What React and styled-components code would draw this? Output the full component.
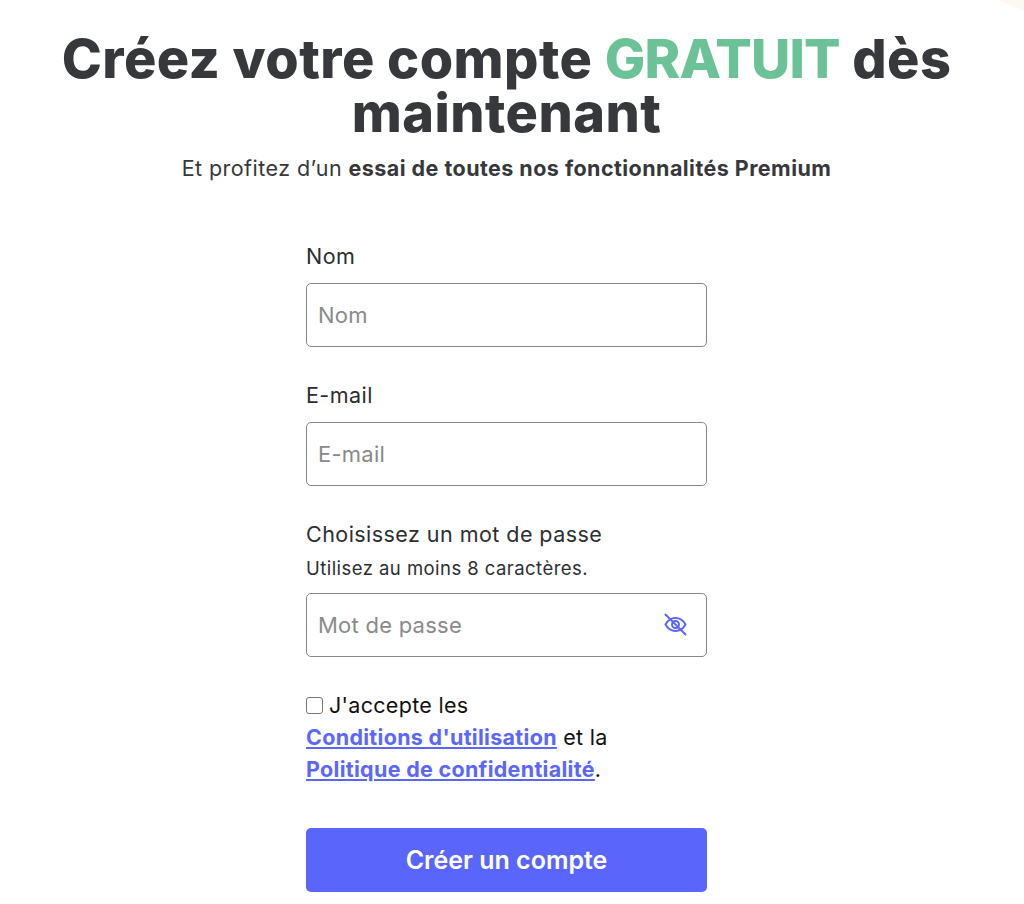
import React from "react";
import styled, { createGlobalStyle } from "styled-components";

const Global = createGlobalStyle`
  html, body { margin: 0; padding: 0; background: #fff; }
  body { font-family: Inter, "Noto Sans", "Liberation Sans", sans-serif; }
  * { box-sizing: border-box; }
`;
const Page = styled.main`
  position: relative; width: 1024px; height: 904px; overflow: hidden; background: #fff;
  padding: 32px 11px 0 0; display: flex; flex-direction: column; align-items: center;
`;
const Corner = styled.div`
  position: absolute; top: 0; right: 0; width: 26px; height: 11px;
  background: #fff8f0; clip-path: polygon(0 0, 100% 0, 100% 100%);
`;
const Title = styled.h1`
  margin: 0; width: 900px; text-align: center; color: #36383c;
  font-size: 54px; line-height: 54px; font-weight: 800; letter-spacing: 0.45px;
`;
const Accent = styled.span`color: #6cc297; letter-spacing: -0.8px;`;
const Subtitle = styled.p`
  margin: 13px 0 0; color: #36383c; font-size: 21.5px; line-height: 30px; font-weight: 400; text-align: center; letter-spacing: 0.45px;
  strong { font-weight: 700; }
`;
const Form = styled.form`
  width: 401px; margin-top: 58px; display: flex; flex-direction: column;
`;
const Field = styled.div`display: flex; flex-direction: column; margin-bottom: 33px;`;
const Label = styled.label`font-size: 21.5px; line-height: 30px; letter-spacing: 0.45px; color: #2c2e32; margin-bottom: 12px;`;
const PasswordLabel = styled(Label)`margin-bottom: 7px;`;
const Hint = styled.div`font-size: 18.5px; line-height: 24px; letter-spacing: 0.45px; color: #2c2e32; margin-bottom: 13px;`;
const InputWrap = styled.div`position: relative;`;
const Input = styled.input`
  display: block; width: 100%; height: 64px; border: 1px solid #85878b; border-radius: 5px;
  padding: 0 11px; font: 400 22px Inter, "Noto Sans", sans-serif; letter-spacing: 0.25px; color: #333; background: #fff; outline: none;
  &::placeholder { color: #8a8a8a; opacity: 1; }
`;
const Eye = styled.button`
  position: absolute; top: 19px; right: 19px; padding: 0; border: 0; background: none; color: #5b66fb;
  display: flex; cursor: pointer;
`;
const Terms = styled.div`
  margin-top: -1px; font-size: 21.5px; line-height: 32px; letter-spacing: 0.3px; color: #111;
`;
const Check = styled.input`
  appearance: none; width: 17px; height: 17px; margin: 0 6px 0 0; vertical-align: -1px;
  border: 1.5px solid #767676; border-radius: 3px; background: #fff;
`;
const Link = styled.a`color: #5b66fb; font-weight: 700; text-decoration: underline;`;
const Submit = styled.button`
  margin-top: 43px; height: 64px; width: 100%; border: 0; border-radius: 5px; background: #5a66fb; color: #fff;
  font: 600 25px Inter, "Noto Sans", sans-serif; cursor: pointer;
`;

const EyeSlash = () => (
  <svg width="25" height="25" viewBox="0 0 25 25" fill="none" stroke="currentColor" strokeWidth="2" strokeLinecap="round" strokeLinejoin="round">
    <path d="M2.500 12.500C5 8 8.500 6 12.500 6s7.500 2 10 6.500C20 17 16.500 19 12.500 19s-7.500-2-10-6.500Z" />
    <circle cx="12.500" cy="12.500" r="3.500" />
    <path d="M2.500 2.500l20 20" />
  </svg>
);

export default function App() {
  return (
    <Page>
      <Global />
      <Corner />
      <Title>Créez votre compte <Accent>GRATUIT</Accent> dès maintenant</Title>
      <Subtitle>Et profitez d’un <strong>essai de toutes nos fonctionnalités Premium</strong></Subtitle>
      <Form onSubmit={(e) => e.preventDefault()}>
        <Field>
          <Label>Nom</Label>
          <Input placeholder="Nom" />
        </Field>
        <Field>
          <Label>E-mail</Label>
          <Input placeholder="E-mail" />
        </Field>
        <Field>
          <PasswordLabel>Choisissez un mot de passe</PasswordLabel>
          <Hint>Utilisez au moins 8 caractères.</Hint>
          <InputWrap>
            <Input placeholder="Mot de passe" />
            <Eye type="button" aria-label="Afficher"><EyeSlash /></Eye>
          </InputWrap>
        </Field>
        <Terms>
          <Check type="checkbox" />J'accepte les<br />
          <Link href="#">Conditions d'utilisation</Link> et la<br />
          <Link href="#">Politique de confidentialité</Link>.
        </Terms>
        <Submit>Créer un compte</Submit>
      </Form>
    </Page>
  );
}
